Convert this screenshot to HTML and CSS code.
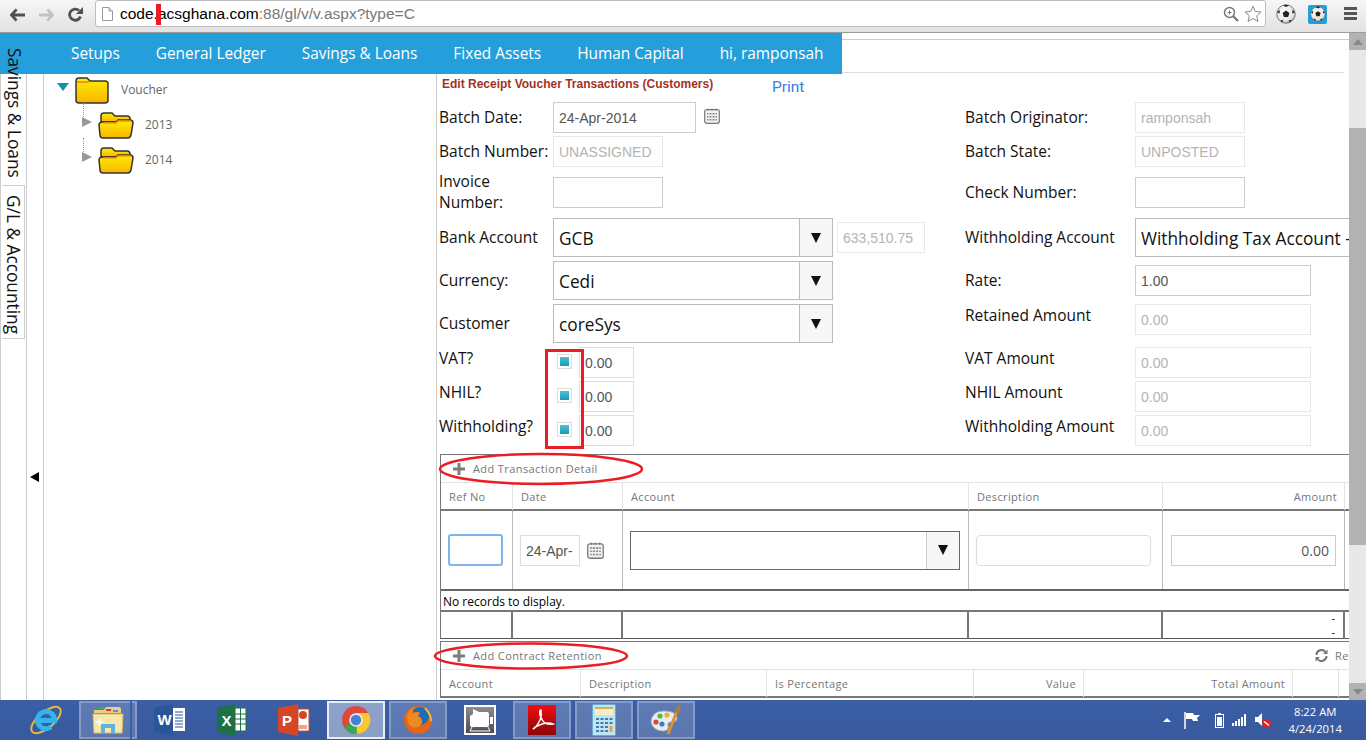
FILE: index.html
```html
<!DOCTYPE html>
<html lang="en">
  <head>
    <meta charset="UTF-8" />
    <title>Edit Receipt Voucher Transactions</title>
    <link rel="stylesheet" href="styles.css">
  </head>
  <body>
    <!-- shared gradients and small icons -->
    <svg class="defs" width="0" height="0">
      <defs>
        <linearGradient id="folderFill" x1="0" y1="0" x2="0" y2="1">
          <stop offset="0" stop-color="#ffee00" />
          <stop offset="1" stop-color="#f7b500" />
        </linearGradient>
        <radialGradient id="ballFill" cx="0.4" cy="0.35" r="0.75">
          <stop offset="0" stop-color="#ffffff" />
          <stop offset="0.7" stop-color="#e4e6e0" />
          <stop offset="1" stop-color="#8f9a8c" />
        </radialGradient>
        <symbol id="cal" viewBox="0 0 16 16">
          <rect x="0.7" y="1.7" width="14.6" height="13.6" rx="2" fill="#f2f2f2" stroke="#777" stroke-width="1.2" />
          <path d="M4 0.5v2M8 0.5v2M12 0.5v2" stroke="#777" />
          <path d="M3 5h10v1.5H3zM3 8h10v1.5H3zM3 11h10v1.5H3z" fill="#888" />
          <path d="M5 5v8M8 5v8M11 5v8" stroke="#f2f2f2" />
        </symbol>
        <symbol id="folderClosed" viewBox="0 0 34 28">
          <path d="M1 5q0-3 3-3h8l3 3h15q3 0 3 3v16q0 3-3 3H4q-3 0-3-3z" fill="url(#folderFill)" stroke="#333" stroke-width="1.5" />
          <path d="M2 6h12" stroke="#f29a00" stroke-width="2" />
        </symbol>
        <symbol id="folderOpen" viewBox="0 0 36 28">
          <path d="M3 5q0-3 3-3h8l3 3h12q3 0 3 3v3H3z" fill="url(#folderFill)" stroke="#333" stroke-width="1.5" />
          <path d="M5 11h13l2-2h12q3 0 3 3l-2 12q-1 3-3 3H5q-3 0-3-3l-1-10q0-3 4-3z" fill="url(#folderFill)" stroke="#333" stroke-width="1.5" />
          <path d="M5 12h13l2-2h13" stroke="#f29a00" stroke-width="1.5" fill="none" />
        </symbol>
        <symbol id="ball" viewBox="0 0 20 20">
          <circle cx="10" cy="10" r="9.2" fill="url(#ballFill)" stroke="#555" stroke-width="0.8" />
          <path d="M10 6.5l3.4 2.4-1.3 4H7.9l-1.3-4z" fill="#222" />
          <path d="M7 1.5l3 1.6 3-1.6-3-0.8zM1.2 8.5l2.2-3 .4 4zM18.8 8.5l-2.2-3-.4 4zM4.5 16l3 .2-1.5 2.2zM15.5 16l-3 .2 1.5 2.2z" fill="#222" />
        </symbol>
        <symbol id="plus" viewBox="0 0 12 12">
          <path d="M4.5 0h3v4.5H12v3H7.5V12h-3V7.5H0v-3h4.5z" fill="#7c7c7c" />
        </symbol>
      </defs>
    </svg>

    <header class="browser-bar">
      <svg class="nav-icon" width="15" height="14" viewBox="0 0 16 14"><path d="M7 1L1.500 7 7 13M2 7h14" fill="none" stroke="#505050" stroke-width="3" /></svg>
      <svg class="nav-icon" width="15" height="14" viewBox="0 0 16 14"><path d="M9 1l5.500 6L9 13M14 7H0" fill="none" stroke="#c2c2c2" stroke-width="3" /></svg>
      <svg class="nav-icon" width="15" height="15" viewBox="0 0 15 15"><path d="M12.500 9.500A5.600 5.600 0 1 1 11 3.500" fill="none" stroke="#505050" stroke-width="2.800" /><path d="M15 0v7H8z" fill="#505050" /></svg>
      <div class="address">
        <svg width="11" height="14" viewBox="0 0 11 14"><path d="M.5.5h6.500l3.500 3.500v9.500H.5z" fill="#fff" stroke="#999" /><path d="M7 .5V4h3.500" fill="#e4e4e4" stroke="#999" /></svg>
        <div class="url">code.acsghana.com<span class="url-rest">:88/gl/v/v.aspx?type=C</span></div>
        <svg class="zoom-icon" width="16" height="16" viewBox="0 0 16 16"><circle cx="6.500" cy="6.500" r="5" fill="none" stroke="#777" stroke-width="1.500" /><path d="M10 10l5 5" stroke="#777" stroke-width="2.200" /><path d="M4.500 6.500h4M6.500 4.500v4" stroke="#777" /></svg>
        <svg width="18" height="18" viewBox="0 0 18 18"><path d="M9 1.200l2.300 5.300 5.700.5-4.300 3.800 1.300 5.600L9 13.500l-5 2.900 1.300-5.600L1 7l5.700-.5z" fill="#fff" stroke="#888" /></svg>
      </div>
      <svg class="ball-one" width="20" height="20"><use href="#ball" /></svg>
      <div class="ball-two"><svg width="16" height="16"><use href="#ball" /></svg></div>
      <div class="menu-icon"><span></span><span></span><span></span></div>
    </header>

    <div class="page">
      <nav class="top-nav">
        <a>Setups</a>
        <a>General Ledger</a>
        <a>Savings &amp; Loans</a>
        <a>Fixed Assets</a>
        <a>Human Capital</a>
        <a>hi, ramponsah</a>
      </nav>

      <aside class="side-tabs">
        <div class="side-tab first">Savings &amp; Loans</div>
        <div class="side-tab">G/L &amp; Accounting</div>
      </aside>
      <div class="splitter"><span class="split-arrow"></span></div>

      <section class="tree">
        <div class="tree-row">
          <span class="tree-open"></span>
          <svg class="folder" width="34" height="28"><use href="#folderClosed" /></svg>
          <span class="tree-text">Voucher</span>
        </div>
        <div class="tree-row child">
          <span class="tree-shut"></span>
          <svg class="folder" width="36" height="28"><use href="#folderOpen" /></svg>
          <span class="tree-text">2013</span>
        </div>
        <div class="tree-row child">
          <span class="tree-shut"></span>
          <svg class="folder" width="36" height="28"><use href="#folderOpen" /></svg>
          <span class="tree-text">2014</span>
        </div>
      </section>

      <main class="content">
        <div class="tab-strip"></div>
        <div class="tab-line"></div>
        <div class="title-row">
          <h1 class="title">Edit Receipt Voucher Transactions (Customers)</h1>
          <a class="print">Print</a>
        </div>

        <div class="form-grid">
          <div class="label">Batch Date:</div>
          <div class="cell">
            <div class="input w143">24-Apr-2014</div>
            <svg class="cal" width="16" height="16"><use href="#cal" /></svg>
          </div>
          <div class="label">Batch Originator:</div>
          <div class="cell"><div class="input w110 off">ramponsah</div></div>

          <div class="label">Batch Number:</div>
          <div class="cell"><div class="input w110 off">UNASSIGNED</div></div>
          <div class="label">Batch State:</div>
          <div class="cell"><div class="input w110 off">UNPOSTED</div></div>

          <div class="label two-line">Invoice<br>Number:</div>
          <div class="cell"><div class="input w110"></div></div>
          <div class="label">Check Number:</div>
          <div class="cell"><div class="input w110"></div></div>

          <div class="label tall">Bank Account</div>
          <div class="cell">
            <div class="select"><span class="select-text">GCB</span><span class="select-btn"><i></i></span></div>
            <div class="input balance off">633,510.75</div>
          </div>
          <div class="label tall">Withholding Account</div>
          <div class="cell"><div class="select wide"><span class="select-text">Withholding Tax Account -</span></div></div>

          <div class="label tall">Currency:</div>
          <div class="cell"><div class="select"><span class="select-text">Cedi</span><span class="select-btn"><i></i></span></div></div>
          <div class="label tall">Rate:</div>
          <div class="cell"><div class="input w176 rate">1.00</div></div>

          <div class="label tall">Customer</div>
          <div class="cell"><div class="select"><span class="select-text">coreSys</span><span class="select-btn"><i></i></span></div></div>
          <div class="label short">Retained Amount</div>
          <div class="cell"><div class="input w176 off">0.00</div></div>

          <div class="label short">VAT?</div>
          <div class="cell"><span class="check"><i></i></span><div class="input w55">0.00</div></div>
          <div class="label short">VAT Amount</div>
          <div class="cell"><div class="input w176 off">0.00</div></div>

          <div class="label short">NHIL?</div>
          <div class="cell"><span class="check"><i></i></span><div class="input w55">0.00</div></div>
          <div class="label short">NHIL Amount</div>
          <div class="cell"><div class="input w176 off">0.00</div></div>

          <div class="label short">Withholding?</div>
          <div class="cell"><span class="check"><i></i></span><div class="input w55">0.00</div></div>
          <div class="label short">Withholding Amount</div>
          <div class="cell"><div class="input w176 off">0.00</div></div>
        </div>

        <section class="grid-box first-box">
          <div class="grid-tools">
            <svg width="12" height="12"><use href="#plus" /></svg>
            <span>Add Transaction Detail</span>
          </div>
          <div class="row detail-cols head">
            <div>Ref No</div><div>Date</div><div>Account</div><div>Description</div><div class="right">Amount</div><div></div>
          </div>
          <div class="row detail-cols data">
            <div class="data-cell"><div class="ref-input"></div></div>
            <div class="data-cell">
              <div class="date-input">24-Apr-</div>
              <svg class="cal-small" width="17" height="17"><use href="#cal" /></svg>
            </div>
            <div class="data-cell"><div class="select dark"><span class="select-text"></span><span class="select-btn"><i></i></span></div></div>
            <div class="data-cell"><div class="desc-input"></div></div>
            <div class="data-cell"><div class="amount-input">0.00</div></div>
            <div></div>
          </div>
          <div class="no-records">No records to display.</div>
          <div class="row detail-cols foot">
            <div></div><div></div><div></div><div></div><div class="dashes">-<br>-</div><div></div>
          </div>
        </section>

        <section class="grid-box">
          <div class="grid-tools">
            <svg width="12" height="12"><use href="#plus" /></svg>
            <span>Add Contract Retention</span>
            <svg class="refresh-icon" width="13" height="13" viewBox="0 0 13 13"><path d="M1.500 6A5 5 0 0 1 10.500 3M11.500 7A5 5 0 0 1 2.500 10" fill="none" stroke="#777" stroke-width="2" /><path d="M12.500 .5v4.500H8zM.5 12.500V8H5z" fill="#777" /></svg>
            <span class="refresh-text">Refresh</span>
          </div>
          <div class="row retention-cols head">
            <div>Account</div><div>Description</div><div>Is Percentage</div><div class="right">Value</div><div class="right">Total Amount</div><div></div><div></div>
          </div>
        </section>
      </main>

      <div class="scrollbar">
        <span class="scroll-btn"><i class="up"></i></span>
        <span class="scroll-thumb"></span>
        <span class="scroll-btn"><i class="down"></i></span>
      </div>
    </div>

    <footer class="taskbar">
      <div class="task">
        <svg width="34" height="34" viewBox="0 0 34 34">
          <ellipse cx="17" cy="17" rx="18" ry="8" transform="rotate(-40 17 17)" fill="none" stroke="#e4b93c" stroke-width="2" />
          <path d="M8.500 17.500h17A8.500 8.500 0 1 0 22 24" fill="none" stroke="#33b4ea" stroke-width="5" />
        </svg>
      </div>
      <div class="task on stacked">
        <svg width="32" height="30" viewBox="0 0 32 30">
          <path d="M2 5h10l2-3h13q2 0 2 2v4H2z" fill="#e9cf85" />
          <path d="M6 2h6v2H6z" fill="#35b04a" /><path d="M14 4h5v2h-5z" fill="#d23f31" /><path d="M21 5h5v2h-5z" fill="#3d9ee0" />
          <path d="M1 9h30l-1 19H2z" fill="#f8e7ab" stroke="#d9bb68" />
          <path d="M9 28v-9h14v9h-4v-5h-6v5z" fill="#5fb5dc" />
          <path d="M7 13l2 3 3 1-3 1-2 3-1-3-3-1 3-1z" fill="#fff" />
        </svg>
      </div>
      <div class="task">
        <svg width="32" height="32" viewBox="0 0 32 32">
          <path d="M0 4l19-4v32L0 28z" fill="#2a5699" />
          <path d="M19 4h12v23H19z" fill="#fff" />
          <path d="M21 8h8M21 11h8M21 14h8M21 17h8M21 20h8M21 23h8" stroke="#2a5699" />
          <text class="app-letter" x="3.500" y="21">W</text>
        </svg>
      </div>
      <div class="task">
        <svg width="30" height="32" viewBox="0 0 30 32">
          <path d="M0 4l18-4v32L0 28z" fill="#1e7145" />
          <path d="M18 4h11v23H18z" fill="#fff" stroke="#1e7145" />
          <path d="M18 10h11M18 15h11M18 20h11M23.500 4v23" stroke="#1e7145" />
          <text class="app-letter" x="4.500" y="22">X</text>
        </svg>
      </div>
      <div class="task">
        <svg width="32" height="32" viewBox="0 0 32 32">
          <path d="M0 4l20-4v32L0 28z" fill="#d24726" />
          <path d="M20 5h11v22H20z" fill="#fff" stroke="#d24726" />
          <path d="M21 22h8M21 24h8" stroke="#d24726" />
          <circle cx="25" cy="11" r="4" fill="#d24726" />
          <text class="app-letter" x="4" y="22">P</text>
        </svg>
      </div>
      <div class="task active">
        <svg width="30" height="30" viewBox="0 0 30 30">
          <circle cx="15" cy="15" r="14" fill="#dd4a3c" />
          <path d="M15 15L2.900 22A14 14 0 0 0 17 28.900z" fill="#3aa655" />
          <path d="M15 8h12.500A14 14 0 0 1 16 29z" fill="#fbc92b" />
          <circle cx="15" cy="15" r="6.800" fill="#e8eef6" />
          <circle cx="15" cy="15" r="5.200" fill="#4a80d0" />
        </svg>
      </div>
      <div class="task on">
        <svg width="30" height="32" viewBox="0 0 30 32">
          <circle cx="15" cy="16" r="14" fill="#e4651c" />
          <circle cx="17" cy="12" r="9" fill="#1f6db5" />
          <path d="M4 12q2-8 9-10-4 3-3 7 4-2 7 0l-2 3q5 2 4 7-3 6-10 4-5-3-5-11z" fill="#ef8a1f" />
          <path d="M22 4q6 6 6 13" fill="none" stroke="#f6b73c" stroke-width="2" />
        </svg>
      </div>
      <div class="task bare">
        <div class="video-thumb">
          <svg width="26" height="25" viewBox="0 0 26 25">
            <path d="M3 8l3-2V1l6 3h8q2 0 2 2v11q0 2-2 2H5q-2 0-2-2z" fill="#fff" />
            <path d="M23 9h3v7h-3z" fill="#fff" />
            <path d="M5 19l-2 4h20l-2-4" fill="none" stroke="#fff" />
          </svg>
        </div>
      </div>
      <div class="task on">
        <svg width="28" height="30" viewBox="0 0 28 30">
          <defs><linearGradient id="pdfFill" x1="0" y1="0" x2="0" y2="1"><stop offset="0" stop-color="#ee0f0f" /><stop offset="1" stop-color="#8e0505" /></linearGradient></defs>
          <rect width="28" height="30" fill="url(#pdfFill)" />
          <path d="M5 24q3-1 7-9 2-5 1-10-2 0-1 5 2 6 5 8 4 2 8 1-5-2-11 0-6 2-9 5z" fill="none" stroke="#fff" stroke-width="1.500" />
        </svg>
      </div>
      <div class="task on">
        <svg width="24" height="32" viewBox="0 0 24 32">
          <rect x=".5" y=".5" width="23" height="31" rx="1" fill="#bfe5f5" stroke="#69a8c9" />
          <rect x="3" y="3" width="18" height="8" fill="#f4efc6" />
          <path d="M3 3h18v2H3z" fill="#e3a743" />
          <path d="M4 14h3v2H4zM8.500 14h3v2h-3zM13 14h3v2h-3zM17.500 14h3v2h-3zM4 18h3v2H4zM8.500 18h3v2h-3zM13 18h3v2h-3zM17.500 18h3v2h-3zM4 22h3v2H4zM8.500 22h3v2h-3zM13 22h3v2h-3zM4 26h3v2H4zM8.500 26h3v2h-3zM13 26h3v2h-3z" fill="#3f7fa8" />
          <path d="M17.500 22h3v6h-3z" fill="#e3a743" />
        </svg>
      </div>
      <div class="task on">
        <svg width="32" height="32" viewBox="0 0 32 32">
          <path d="M1 18Q2 7 14 7t13 7q0 4-6 4-4 0-3 4t-4 5Q3 27 1 18z" fill="#e6eef2" stroke="#a9b6bd" />
          <circle cx="6" cy="18" r="2.600" fill="#d9473c" /><circle cx="10" cy="12" r="2.600" fill="#5fb446" />
          <circle cx="17" cy="11" r="2.600" fill="#efb42c" /><circle cx="12" cy="20" r="2.600" fill="#3c7fc4" />
          <path d="M18 30L27 7" stroke="#e2902c" stroke-width="3" />
          <path d="M25 7l3-6 3 1-1 6-2 2z" fill="#a87a4a" />
        </svg>
      </div>

      <div class="tray">
        <span class="tray-arrow"></span>
        <svg class="tray-flag" width="16" height="17" viewBox="0 0 16 17"><path d="M1 0v17" stroke="#fff" stroke-width="1.500" /><path d="M2 1h7l1 2h6l-3 3 1 3H9L8 7H2z" fill="#fff" /></svg>
        <svg width="9" height="15" viewBox="0 0 9 15"><rect x=".5" y="1.500" width="8" height="13" fill="none" stroke="#fff" /><path d="M3 0h3v1.500H3z" fill="#fff" /><rect x="2" y="4" width="5" height="9" fill="#fff" /></svg>
        <svg width="15" height="12" viewBox="0 0 15 12"><path d="M0 9h2v3H0zM3 7h2v5H3zM6 5h2v7H6zM9 3h2v9H9zM12 0h2v12h-2z" fill="#fff" /></svg>
        <svg width="16" height="16" viewBox="0 0 16 16"><path d="M0 5h3l4-4v13L3 10H0z" fill="#fff" /><circle cx="11.500" cy="11.500" r="4.500" fill="#e0202a" /><path d="M9 9.500l5 4" stroke="#fff" stroke-width="1.500" /></svg>
        <div class="clock"><div>8:22 AM</div><div>4/24/2014</div></div>
      </div>
    </footer>

    <!-- red marks drawn on top of the screenshot -->
    <svg class="marks" width="1366" height="740" viewBox="0 0 1366 740">
      <path d="M158.500 4v21" stroke="#ed1c24" stroke-width="5" />
      <rect x="546.500" y="350.500" width="36" height="97" fill="none" stroke="#ed1c24" stroke-width="3" />
      <ellipse cx="541" cy="469" rx="101" ry="15" fill="none" stroke="#ed1c24" stroke-width="2.500" />
      <ellipse cx="531" cy="656" rx="96" ry="12.500" fill="none" stroke="#ed1c24" stroke-width="2.500" />
    </svg>
  </body>
</html>
```

FILE: styles.css
```css
html, body {
  margin: 0;
  height: 740px;
  overflow: hidden;
  background-color: #fff;
}
body {
  font-family: 'Open Sans', 'Liberation Sans', sans-serif;
  color: #222;
  position: relative;
}
.defs {
  position: absolute;
}

/* browser toolbar */
.browser-bar {
  height: 32px;
  display: flex;
  align-items: center;
  background: linear-gradient(#f6f6f6, #e2e2e2);
  border-bottom: 1px solid #9c9c9c;
}
.nav-icon {
  margin-left: 10px;
  margin-right: 4px;
  margin-top: -3px;
  flex: none;
}
.nav-icon + .nav-icon {
  margin-left: 10px;
}
.address {
  width: 1163px;
  height: 25px;
  flex: none;
  margin-left: 8px;
  margin-top: -5px;
  display: flex;
  align-items: center;
  background-color: #fff;
  border: 1px solid #bdbdbd;
  border-radius: 3px;
  padding-left: 6px;
}
.url {
  margin-left: 7px;
  flex: 1;
  font-family: 'Liberation Sans', sans-serif;
  font-size: 15.500px;
  color: #000;
}
.url-rest {
  color: #777;
}
.zoom-icon {
  margin-right: 5px;
}
.address svg:last-child {
  margin-right: 3px;
}
.ball-one {
  margin-left: 10px;
  margin-top: -4px;
}
.ball-two {
  width: 19px;
  height: 19px;
  margin-left: 12px;
  margin-top: -4px;
  display: flex;
  align-items: center;
  justify-content: center;
  background-color: #1ea0e0;
  border-radius: 2px;
}
.menu-icon {
  margin-left: 17px;
  margin-top: -4px;
}
.menu-icon span {
  display: block;
  width: 13px;
  height: 3px;
  margin-bottom: 2px;
  background-color: #555;
}

/* page area */
.page {
  height: 667px;
  display: flex;
  position: relative;
  overflow: hidden;
}
.top-nav {
  position: absolute;
  left: 0;
  top: 0;
  width: 842px;
  height: 41px;
  padding-left: 71px;
  box-sizing: border-box;
  display: flex;
  align-items: center;
  gap: 36px;
  background-color: #259fdb;
  color: #fff;
  font-size: 15.400px;
  z-index: 2;
}
.side-tabs {
  width: 27px;
  flex: none;
  padding-left: 1px;
  box-sizing: border-box;
  border-left: 1px solid #ccc;
  border-right: 1px solid #ccc;
  position: relative;
  z-index: 3;
  margin-top: 41px;
}
.side-tab {
  writing-mode: vertical-rl;
  width: 23px;
  height: 154px;
  padding-top: 9px;
  box-sizing: border-box;
  border: 1px solid #ccc;
  border-left: 0;
  font-size: 17.300px;
  line-height: 22px;
  color: #111;
  white-space: nowrap;
}
.side-tab.first {
  border: 0;
  height: 137px;
  padding-top: 0;
  margin-top: -26px;
}
.splitter {
  width: 17px;
  flex: none;
  border-right: 1px solid #ccc;
  box-sizing: border-box;
  padding: 439px 0 0 1px;
}
.split-arrow {
  display: block;
  width: 0;
  height: 0;
  margin-left: 2px;
  border-style: solid;
  border-width: 5px 9px 5px 0;
  border-color: transparent #000 transparent transparent;
}
.tree {
  width: 393px;
  flex: none;
  padding-top: 39px;
  box-sizing: border-box;
  border-right: 1px solid #ccc;
}
.tree-row {
  height: 35px;
  display: flex;
  align-items: center;
  padding-left: 13px;
  font-size: 12px;
  color: #666;
}
.tree-row.child {
  padding-left: 38px;
  position: relative;
}
.tree-row.child::before {
  content: "";
  position: absolute;
  left: 39px;
  top: -4px;
  height: 22px;
  border-left: 1px dotted #999;
}
.tree-open {
  width: 0;
  height: 0;
  border-style: solid;
  border-width: 8px 6px 0 6px;
  border-color: #1490ad transparent transparent transparent;
  margin-top: -6px;
}
.tree-shut {
  width: 0;
  height: 0;
  border-style: solid;
  border-width: 5px 0 5px 10px;
  border-color: transparent transparent transparent #999;
  margin-top: -6px;
  margin-right: 6px;
}
.folder {
  margin-left: 6px;
}
.tree-row.child .folder {
  margin-left: 0;
}
.tree-text {
  margin-left: 12px;
}
.tree-row.child .tree-text {
  margin-left: 11px;
}

/* main content */
.content {
  width: 912px;
  flex: none;
  overflow: hidden;
}
.tab-strip {
  height: 6px;
  border-bottom: 1px solid #ccc;
}
.tab-line {
  height: 32px;
  width: 907px;
  border-bottom: 1px solid #ddd;
}
.title-row {
  height: 29px;
  display: flex;
  padding-left: 5px;
}
.title {
  width: 330px;
  margin: 3px 0 0;
  font-family: 'Liberation Sans', sans-serif;
  font-size: 12px;
  font-weight: bold;
  line-height: 16px;
  color: #a5321e;
}
.print {
  font-family: Roboto, sans-serif;
  font-size: 15.500px;
  color: #3b7de0;
  margin-top: 5px;
}
.form-grid {
  display: grid;
  grid-template-columns: 114px 412px 170px 1fr;
  grid-template-rows: 34px 41px 41px 43px 43px 43px 34px 34px 34px;
  margin-left: 2px;
  height: 352px;
}
.label {
  font-size: 15.500px;
  line-height: 31px;
  color: #111;
  white-space: nowrap;
}
.label.two-line {
  line-height: 21px;
  margin-top: -6px;
}
.label.tall {
  line-height: 39px;
}
.label.short {
  line-height: 23px;
}
.cell {
  display: flex;
  align-items: flex-start;
}
.input {
  height: 31px;
  box-sizing: border-box;
  border: 1px solid #ccc;
  padding: 0 5px;
  font-family: 'Liberation Sans', sans-serif;
  font-size: 14px;
  line-height: 31px;
  color: #555;
  background-color: #fff;
}
.input.off {
  border-color: #e8e8e8;
  color: #b4b4b4;
}
.w143 { width: 143px; }
.w110 { width: 110px; }
.w176 { width: 176px; }
.w55 {
  width: 55px;
  padding-left: 5px;
  border-color: #ddd;
}
.balance {
  width: 88px;
  margin: 4px 0 0 4px;
}
.rate {
  margin-top: 4px;
}
.cal {
  margin: 6px 0 0 8px;
}
.select {
  width: 280px;
  height: 39px;
  box-sizing: border-box;
  border: 1px solid #bbb;
  display: flex;
  background-color: #fff;
}
.select.wide {
  width: 400px;
  flex: none;
}
.select-text {
  flex: 1;
  padding-left: 5px;
  font-size: 17.300px;
  line-height: 40px;
  color: #111;
  white-space: nowrap;
}
.select-btn {
  width: 32px;
  border-left: 1px solid #bbb;
  background-color: #f7f7f7;
  display: flex;
  align-items: center;
  justify-content: center;
}
.select-btn i {
  width: 0;
  height: 0;
  border-style: solid;
  border-width: 10px 5.500px 0 5.500px;
  border-color: #111 transparent transparent transparent;
}
.check {
  width: 15px;
  height: 15px;
  box-sizing: border-box;
  margin: 7px 7px 0 4px;
  padding: 2px;
  background-color: #fff;
  border: 1px solid #ddd;
  flex: none;
}
.check i {
  display: block;
  width: 9px;
  height: 9px;
  background: linear-gradient(#4cc0d6, #1c98b6);
}

/* the two grids */
.grid-box {
  width: 935px;
  margin-left: 3px;
  box-sizing: border-box;
  border-top: 1px solid #777;
  border-left: 1px solid #777;
}
.first-box {
  height: 185px;
  border-bottom: 1px solid #555;
  margin-bottom: 2px;
}
.grid-tools {
  height: 28px;
  display: flex;
  align-items: center;
  padding-left: 12px;
  border-bottom: 1px solid #e4e4e4;
  box-sizing: border-box;
  font-size: 11px;
  color: #777;
  letter-spacing: 0.400px;
}
.grid-tools span {
  margin-left: 8px;
}
.refresh-icon {
  margin-left: auto;
}
.grid-tools .refresh-text {
  margin-left: 7px;
  width: 40px;
}
.row {
  display: grid;
  box-sizing: border-box;
}
.detail-cols {
  grid-template-columns: 72px 110px 346px 194px 182px 1fr;
}
.retention-cols {
  grid-template-columns: 140px 186px 207px 110px 209px 46px 1fr;
}
.head {
  height: 28px;
  border-bottom: 2px solid #777;
  font-size: 11px;
  line-height: 27px;
  color: #777;
  letter-spacing: 0.350px;
}
.head > div {
  padding: 0 7px 0 8px;
  border-right: 1px solid #e4e4e4;
}
.right {
  text-align: right;
}
.data {
  height: 80px;
  border-bottom: 2px solid #666;
}
.data > div {
  border-right: 1px solid #bbb;
}
.data-cell {
  display: flex;
  align-items: center;
  padding: 0 8px;
}
.ref-input {
  width: 55px;
  height: 32px;
  margin-left: -1px;
  box-sizing: border-box;
  border: 2px solid #7eb4ea;
  border-radius: 3px;
}
.date-input {
  width: 60px;
  height: 31px;
  margin-left: -1px;
  box-sizing: border-box;
  border: 1px solid #ddd;
  padding-left: 5px;
  overflow: hidden;
  font-family: 'Liberation Sans', sans-serif;
  font-size: 14px;
  line-height: 31px;
  color: #555;
  white-space: nowrap;
}
.cal-small {
  margin-left: 7px;
  flex: none;
}
.select.dark {
  width: 330px;
  border-color: #666;
  flex: none;
  margin-left: -1px;
}
.select.dark .select-btn {
  border-left-color: #ccc;
}
.desc-input {
  width: 175px;
  height: 31px;
  margin-left: -1px;
  box-sizing: border-box;
  border: 1px solid #ddd;
  border-radius: 4px;
}
.amount-input {
  width: 165px;
  height: 31px;
  box-sizing: border-box;
  border: 1px solid #ccc;
  padding-right: 6px;
  text-align: right;
  font-size: 14px;
  line-height: 29px;
  color: #555;
}
.no-records {
  height: 21px;
  box-sizing: border-box;
  border-bottom: 2px solid #777;
  padding-left: 2px;
  font-size: 12px;
  line-height: 21px;
  color: #000;
}
.foot {
  height: 26px;
}
.foot > div {
  border-right: 2px solid #777;
}
.dashes {
  text-align: right;
  padding-right: 8px;
  font-size: 11px;
  line-height: 14px;
  margin-top: -1px;
  color: #000;
}

/* page scrollbar */
.scrollbar {
  width: 17px;
  flex: none;
  display: flex;
  flex-direction: column;
  background-color: #e8e8e8;
}
.scroll-btn {
  height: 17px;
  flex: none;
  background-color: #b2b2b2;
  display: flex;
  align-items: center;
  justify-content: center;
}
.scroll-btn i {
  width: 0;
  height: 0;
  border-style: solid;
}
.scroll-btn .up {
  border-width: 0 5px 6px 5px;
  border-color: transparent transparent #888 transparent;
}
.scroll-btn .down {
  border-width: 6px 5px 0 5px;
  border-color: #888 transparent transparent transparent;
}
.scroll-thumb {
  height: 417px;
  margin: 78px 0 138px;
  flex: none;
  background-color: #b2b2b2;
}

/* windows taskbar */
.taskbar {
  height: 40px;
  display: flex;
  align-items: stretch;
  padding: 1px 0 1px 15px;
  box-sizing: border-box;
  background: linear-gradient(#3b5ea6, #38599c);
}
.task {
  width: 58px;
  margin: 0 2px;
  box-sizing: border-box;
  display: flex;
  align-items: center;
  justify-content: center;
}
.task.on {
  background-color: rgba(255, 255, 255, 0.18);
  border: 2px solid rgba(255, 255, 255, 0.25);
}
.task.stacked {
  position: relative;
}
.task.stacked::after {
  content: "";
  position: absolute;
  right: 3px;
  top: -2px;
  bottom: -2px;
  width: 2px;
  background-color: #3b5ea6;
}
.task.active {
  background-color: rgba(255, 255, 255, 0.42);
  border: 2px solid #e8edf6;
}
.video-thumb {
  width: 32px;
  height: 30px;
  box-sizing: border-box;
  border: 2px solid #fff;
  background: linear-gradient(#8d8a93, #4e4b58);
  display: flex;
  align-items: center;
  justify-content: center;
}
.app-letter {
  font-family: 'Liberation Sans', sans-serif;
  font-size: 15px;
  font-weight: bold;
  fill: #fff;
}
.tray {
  margin-left: auto;
  display: flex;
  align-items: center;
  gap: 8px;
  padding-right: 24px;
  color: #fff;
}
.tray-arrow {
  width: 0;
  height: 0;
  margin-right: 5px;
  border-style: solid;
  border-width: 0 4px 4px 4px;
  border-color: transparent transparent #fff transparent;
}
.tray-flag {
  margin-right: 7px;
}
.clock {
  margin-left: 9px;
  font-size: 11.300px;
  line-height: 17px;
  text-align: center;
}

/* red annotations */
.marks {
  position: absolute;
  left: 0;
  top: 0;
  z-index: 5;
  pointer-events: none;
}
```
